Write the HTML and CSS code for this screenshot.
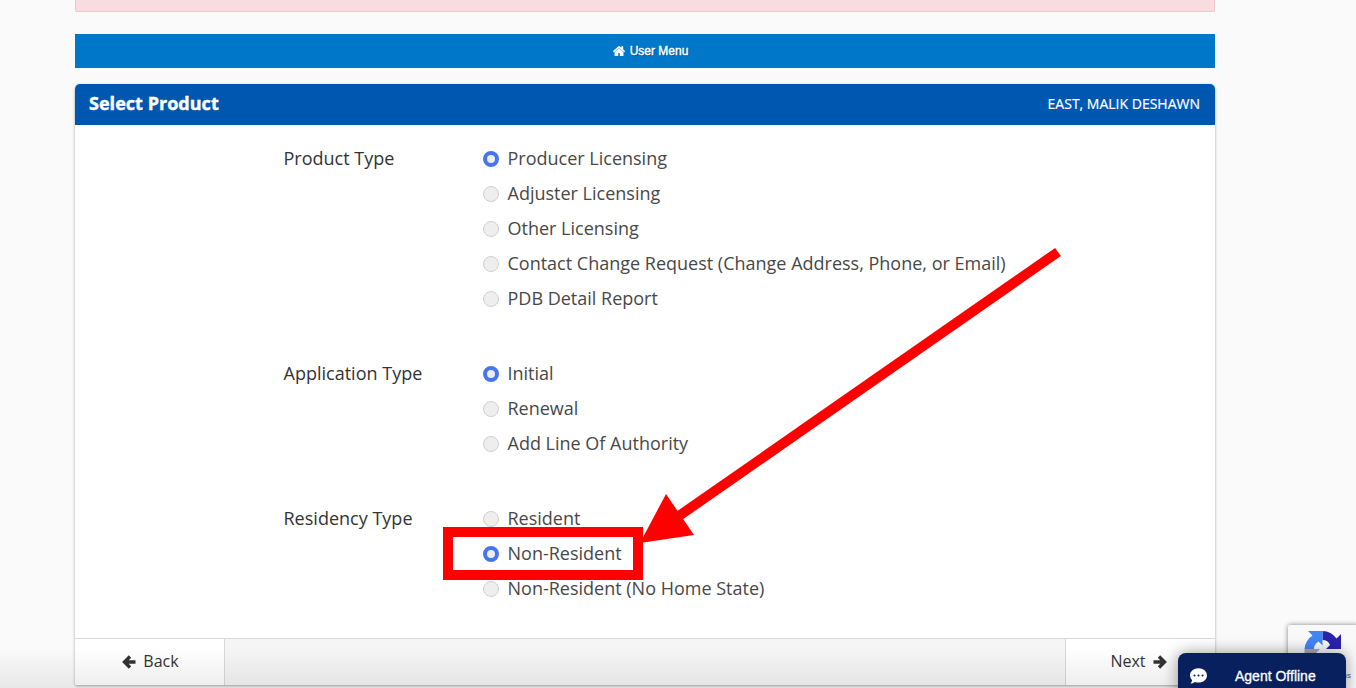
FILE: index.html
```html
<!DOCTYPE html>
<html lang="en">
<head>
<meta charset="utf-8">
<title>Select Product</title>
<link rel="stylesheet" href="styles.css">
</head>
<body>
<div class="alert"></div>
<nav class="menu">
  <svg class="home" viewBox="0 0 12 10"><path d="M6 0 0 5.300l.8.9L6 1.700l5.200 4.500.8-.9-2-1.800V.6H8.400v1.500zM6 2.600 1.800 6.200V10H5V7h2v3h3.200V6.200z"/></svg>
  <span>User Menu</span>
</nav>
<main class="card">
  <header class="head"><h1>Select Product</h1><span class="user">EAST, MALIK DESHAWN</span></header>
  <form class="form">
    <section class="group">
      <div class="legend">Product Type</div>
      <div class="options">
        <label><input type="radio" name="product" checked><span>Producer Licensing</span></label>
        <label><input type="radio" name="product"><span>Adjuster Licensing</span></label>
        <label><input type="radio" name="product"><span>Other Licensing</span></label>
        <label><input type="radio" name="product"><span>Contact Change Request (Change Address, Phone, or Email)</span></label>
        <label><input type="radio" name="product"><span>PDB Detail Report</span></label>
      </div>
    </section>
    <section class="group">
      <div class="legend">Application Type</div>
      <div class="options">
        <label><input type="radio" name="application" checked><span>Initial</span></label>
        <label><input type="radio" name="application"><span>Renewal</span></label>
        <label><input type="radio" name="application"><span>Add Line Of Authority</span></label>
      </div>
    </section>
    <section class="group">
      <div class="legend">Residency Type</div>
      <div class="options">
        <label><input type="radio" name="residency"><span>Resident</span></label>
        <label><input type="radio" name="residency" checked><span>Non-Resident</span></label>
        <label><input type="radio" name="residency"><span>Non-Resident (No Home State)</span></label>
      </div>
    </section>
  </form>
  <footer class="foot">
    <button class="back"><svg class="arrow" viewBox="0 0 14 14"><path d="M8 1.500 2.500 7 8 12.500M3 7h10.500"/></svg>Back</button>
    <button class="next">Next<svg class="arrow" viewBox="0 0 14 14"><path d="M6 1.500 11.500 7 6 12.500M11 7H.5"/></svg></button>
  </footer>
</main>
<div class="fade"></div>
<svg class="marks" viewBox="0 0 1356 688">
  <rect x="448" y="532" width="190" height="43"/>
  <path d="M1058 252 676 518"/>
  <polygon points="640,543 666,494 694,535"/>
</svg>
<aside class="captcha">
  <svg class="captcha-logo" viewBox="0 0 38 38">
    <path fill="#2a23ad" d="M37 19V4l-4.500 4.500A18 18 0 0 0 18.500 1v9q5.500 0 7.500 5l-4 4z"/>
    <path fill="#4285f4" d="M18.500 1H4l4.500 4.500A18 18 0 0 0 .5 19H10q0-5 4.500-7.500l4 4z"/>
    <path fill="#ababab" d="M.5 19v14l4-4A18 18 0 0 0 34 29l-7-6a9 9 0 0 1-15 0l4-4z"/>
  </svg>
  <span class="terms">Terms</span>
</aside>
<div class="chat">
  <svg class="bubble" viewBox="0 0 16 15"><path fill="#fff" d="M8 .3c4.500 0 8 3 8 6.700s-3.500 6.700-8 6.700q-1.800 0-3.400-.6Q2.800 14.500.4 14.600q1.400-1.500 1.600-3.200Q0 9.500 0 7C0 3.300 3.500.3 8 .3z"/><g fill="#0a2463"><circle cx="4.200" cy="7" r="1"/><circle cx="8" cy="7" r="1"/><circle cx="11.800" cy="7" r="1"/></g></svg>
  <span>Agent Offline</span>
</div>
</body>
</html>
```
FILE: styles.css
```css
* { box-sizing: border-box; }
html, body { height: 688px; overflow: hidden; }
body { margin: 0; background: #fafafa; font-family: "Open Sans", sans-serif; color: #333; }
.alert { width: 1140px; height: 12px; margin: 0 0 22px 75px; background: #f8dcdf; border: 1px solid #f0c6cb; border-top: 0; border-radius: 0 0 2px 2px; }
.menu { width: 1140px; height: 34px; margin: 0 0 16px 75px; padding-left: 11px; display: flex; align-items: center; justify-content: center; gap: 5px; background: #0077c8; color: #fff; font: 12px "Liberation Sans", sans-serif; text-shadow: 1px 1px 1px rgba(0,0,0,.35); -webkit-text-stroke: .4px #fff; }
.home { width: 12px; height: 10px; fill: #fff; stroke: #fff; stroke-width: .4; }
.card { width: 1140px; height: 601px; margin-left: 75px; display: flex; flex-direction: column; background: #fff; border-radius: 5px 5px 2px 2px; box-shadow: 0 1px 3px rgba(0,0,0,.35); overflow: hidden; }
.head { height: 41px; flex: none; padding: 0 15px 3px 14px; display: flex; align-items: center; justify-content: space-between; background: #0057b0; color: #fff; }
.head h1 { margin: 0; font-size: 18px; line-height: 24px; letter-spacing: .03px; -webkit-text-stroke: .4px #fff; }
.user { font-size: 14px; line-height: 20px; padding-top: 1px; -webkit-text-stroke: .2px #fff; }
.form { flex: 1; padding: 16px 0 0 208px; display: flex; flex-direction: column; gap: 40px; font-size: 18px; }
.group { display: flex; line-height: 35px; }
.legend { width: 200px; height: 35px; padding-left: .5px; letter-spacing: .01px; }
.options { display: flex; flex-direction: column; }
.options label { height: 35px; display: flex; align-items: center; gap: 8.5px; color: #484848; white-space: nowrap; }
.options input { appearance: none; width: 16px; height: 16px; margin: 0; border: 1px solid #d0d0d0; border-radius: 50%; background: #eee; }
.options input:checked { border: 4px solid #4775f2; }
.foot { height: 47px; flex: none; display: flex; justify-content: space-between; border-top: 1px solid #d9d9d9; background: #f5f5f5; }
.foot button { width: 150px; display: flex; align-items: center; justify-content: center; gap: 7px; border: 0; padding: 0 0 3px; background: #fff; color: #333; font: 16px "Open Sans", sans-serif; }
.foot .back { padding-left: 2px; border-right: 1px solid #d9d9d9; }
.foot .next { border-left: 1px solid #d9d9d9; padding-right: 4px; }
.arrow { width: 14px; height: 14px; margin-top: 2px; fill: none; stroke: #333; stroke-width: 3.4; }
.fade { position: absolute; left: 0; top: 648px; width: 1356px; height: 40px; background: linear-gradient(transparent, rgba(0,0,0,.07)); }
.marks { position: absolute; left: 0; top: 0; width: 1356px; height: 688px; fill: none; stroke: #f00; stroke-width: 10; }
.marks polygon { fill: #f00; stroke: none; }
.captcha { position: absolute; left: 1288px; top: 625px; width: 70px; height: 70px; background: #f9f9f9; border-radius: 2px 0 0 2px; box-shadow: 0 0 5px gray; }
.captcha-logo { display: block; width: 38px; height: 38px; margin: 5px 0 0 16px; }
.terms { display: block; width: 63px; margin-top: 2px; text-align: right; white-space: nowrap; font: 8px/12px "Liberation Sans", sans-serif; color: #555; }
.chat { position: absolute; left: 1178px; top: 653px; width: 168px; height: 45px; padding: 13px 0 0 12px; display: flex; align-items: flex-start; gap: 28px; background: #08215e; border-radius: 8px 8px 0 0; box-shadow: 0 0 16px rgba(0,0,0,.4); color: #fff; font: 14px/20px "Liberation Sans", sans-serif; -webkit-text-stroke: .3px #fff; }
.bubble { width: 17px; height: 16px; margin-top: 2px; }
```
